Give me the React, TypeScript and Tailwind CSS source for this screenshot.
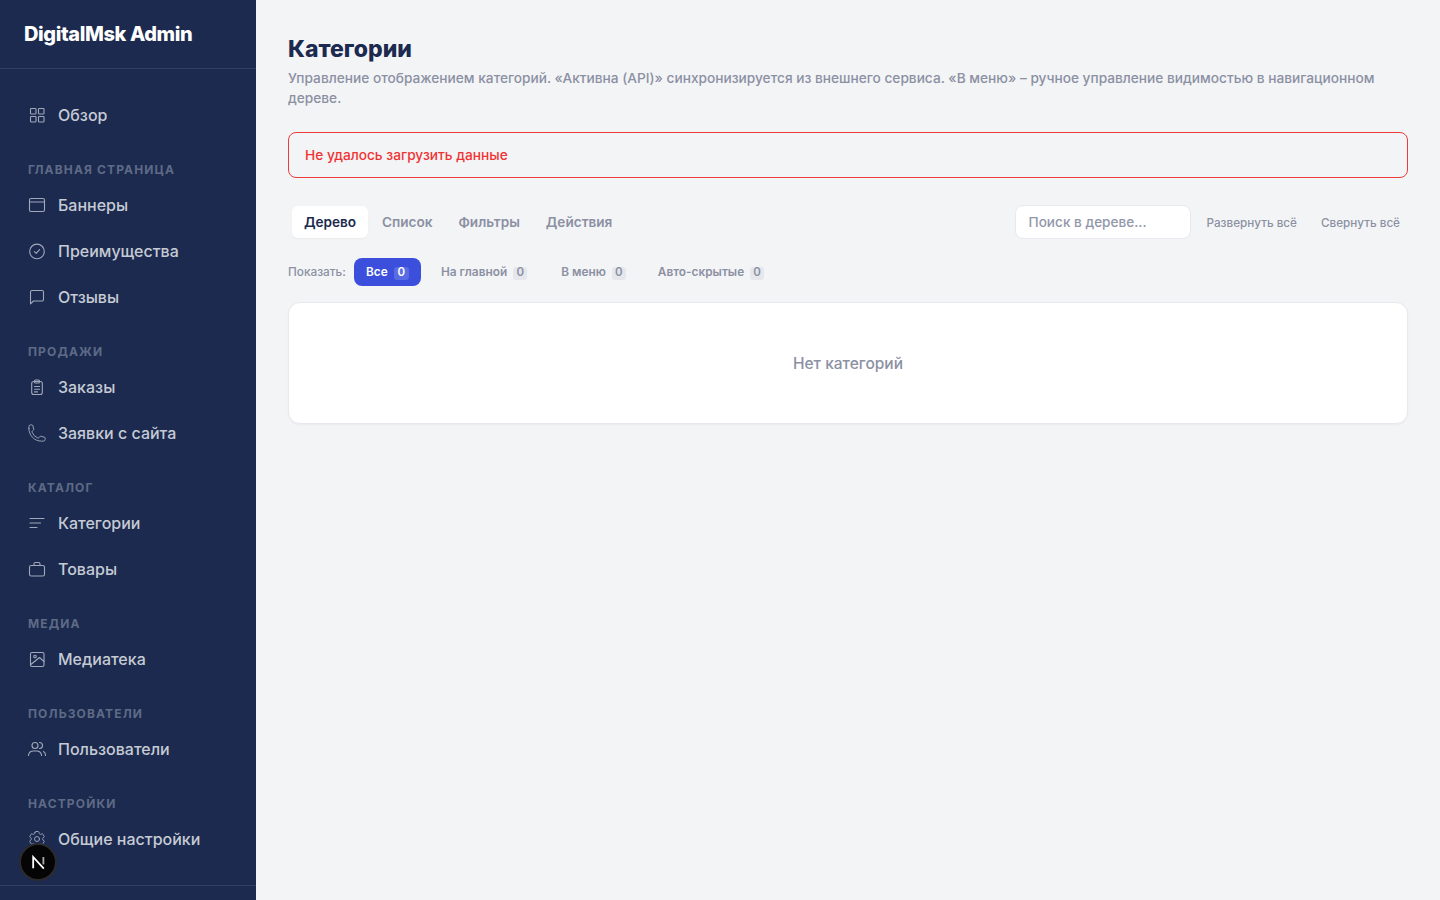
import { HiOutlineCog6Tooth, HiOutlinePhone } from "react-icons/hi2";
import type { ReactNode } from "react";

const iconClass = "w-5 h-5 shrink-0";

function Icon({ children }: { children: ReactNode }) {
  return (
    <svg className={iconClass} viewBox="0 0 20 20" fill="none" stroke="currentColor" strokeWidth="1.1" strokeLinecap="round" strokeLinejoin="round">
      {children}
    </svg>
  );
}

function NavItem({ icon, label }: { icon: ReactNode; label: string }) {
  return (
    <div className="flex items-center gap-[11px] h-10 pl-[27px] mb-1.5 text-[#c6cad5] text-[16px] font-medium">
      <span className="text-[#a2a8ba]">{icon}</span>
      <span>{label}</span>
    </div>
  );
}

function SectionLabel({ children }: { children: string }) {
  return (
    <div className="h-4 mt-[26px] mb-2 pt-[2px] pl-[28px] flex items-center text-[12px] leading-4 font-bold tracking-[0.095em] text-[#5f6a87] uppercase">
      {children}
    </div>
  );
}

function FilterChip({ label }: { label: string }) {
  return (
    <div className="flex items-center gap-[6px] h-7 px-3 pt-[2px] text-[11.85px] font-semibold text-[#8b90a3]">
      <span>{label}</span>
      <span className="h-[13px] w-[14px] flex items-center justify-center rounded-[3px] bg-[#e5e7ec] text-[11.5px] leading-none">0</span>
    </div>
  );
}

export default function App() {
  return (
    <div className="flex h-[900px] overflow-hidden bg-[#f3f4f6] font-['Inter',sans-serif]">
      <aside className="relative w-64 shrink-0 h-full flex flex-col bg-[#1b2a4e]">
        <div className="h-[69px] shrink-0 border-b border-[#323f60] pl-6 pt-[21px]">
          <div className="text-[20px] leading-[26px] font-extrabold tracking-[-0.02em] text-white">DigitalMsk Admin</div>
        </div>
        <nav className="flex-1 overflow-hidden pt-[26px]">
          <NavItem
            label="Обзор"
            icon={
              <Icon>
                <rect x="3.5" y="3.5" width="5.5" height="5.5" rx="0.8" />
                <rect x="11.5" y="3.5" width="5.5" height="5.5" rx="0.8" />
                <rect x="3.5" y="11.5" width="5.5" height="5.5" rx="0.8" />
                <rect x="11.5" y="11.5" width="5.5" height="5.5" rx="0.8" />
              </Icon>
            }
          />
          <SectionLabel>Главная страница</SectionLabel>
          <NavItem
            label="Баннеры"
            icon={
              <Icon>
                <rect x="2.5" y="3.5" width="15" height="13" rx="1.5" />
                <path d="M2.5 7h15" />
              </Icon>
            }
          />
          <NavItem
            label="Преимущества"
            icon={
              <Icon>
                <circle cx="10" cy="10.4" r="7.3" />
                <path d="M7.4 10.6l1.8 1.7 3.4-3.6" />
              </Icon>
            }
          />
          <NavItem
            label="Отзывы"
            icon={
              <Icon>
                <path d="M3.5 16.8V5A1.5 1.5 0 0 1 5 3.5h10A1.5 1.5 0 0 1 16.5 5v7.5A1.5 1.5 0 0 1 15 14H6.5z" />
              </Icon>
            }
          />
          <SectionLabel>Продажи</SectionLabel>
          <NavItem
            label="Заказы"
            icon={
              <Icon>
                <rect x="4.7" y="4.5" width="10.6" height="13" rx="2" />
                <rect x="7.5" y="3" width="5" height="3" rx="1" />
                <path d="M7.5 9.5h5M7.5 12.2h5M7.5 14.9h3" />
              </Icon>
            }
          />
          <NavItem label="Заявки с сайта" icon={<HiOutlinePhone className="w-5 h-5 shrink-0 stroke-[1.1]" />} />
          <SectionLabel>Каталог</SectionLabel>
          <NavItem
            label="Категории"
            icon={
              <Icon>
                <path d="M3 5.5h14M3 10h10.5M3 14.5h7" />
              </Icon>
            }
          />
          <NavItem
            label="Товары"
            icon={
              <Icon>
                <rect x="2.5" y="6.5" width="15" height="10.5" rx="1.8" />
                <path d="M7 6.5V5a1.5 1.5 0 0 1 1.5-1.5h3A1.5 1.5 0 0 1 13 5v1.5" />
              </Icon>
            }
          />
          <SectionLabel>Медиа</SectionLabel>
          <NavItem
            label="Медиатека"
            icon={
              <Icon>
                <rect x="3.5" y="3.5" width="13.5" height="14" rx="1.5" />
                <circle cx="8" cy="7.5" r="1.3" />
                <path d="M3.5 15.8l9-7.3 4.5 4" />
              </Icon>
            }
          />
          <SectionLabel>Пользователи</SectionLabel>
          <NavItem
            label="Пользователи"
            icon={
              <Icon>
                <circle cx="8" cy="6.5" r="3" />
                <path d="M1.5 16.5V16a5 5 0 0 1 5-4h3a5 5 0 0 1 5 4v.5" />
                <path d="M12.5 3.5a3 3 0 0 1 0 6" />
                <path d="M16.5 12.5a4 4 0 0 1 2 3.5v.5" />
              </Icon>
            }
          />
          <SectionLabel>Настройки</SectionLabel>
          <NavItem label="Общие настройки" icon={<HiOutlineCog6Tooth className="w-5 h-5 -mt-px shrink-0 stroke-[1.1]" />} />
        </nav>
        <div className="h-[15px] shrink-0 border-t border-[#323f60]" />
        {/* dev tools badge sits over the nav */}
        <div className="absolute left-[19px] top-[843px] w-[38px] h-[38px] rounded-full bg-[#050505] border-2 border-[#2c2c30] flex items-center justify-center">
          <svg viewBox="0 0 16 16" className="w-[17px] h-[17px]" fill="none">
            <path d="M3 13.5V2.8l10 11" stroke="white" strokeWidth="1.7" />
            <path d="M12.6 2.8v7" stroke="#aaaaaa" strokeWidth="1.7" />
          </svg>
        </div>
      </aside>

      <main className="flex-1 min-w-0 px-8 pt-8">
        <h1 className="text-[23px] leading-[34px] font-extrabold text-[#1b2a4e]">Категории</h1>
        <p className="mt-[2px] text-[13.7px] leading-5 font-medium text-[#8b90a3]">
          Управление отображением категорий. «Активна (API)» синхронизируется из внешнего сервиса. «В меню» – ручное управление видимостью в навигационном дереве.
        </p>

        <div className="mt-6 h-[46px] flex items-center px-4 rounded-lg border border-[#ef3a3a] text-[13.7px] font-medium text-[#ef3333]">
          Не удалось загрузить данные
        </div>

        <div className="mt-[22px] h-[44px] flex items-center justify-between">
          <div className="flex items-center pl-1 text-[13.6px] font-semibold text-[#8b90a3]">
            <div className="h-8 w-[76px] flex items-center justify-center rounded-md bg-white text-[#1b2a4e] shadow-[0_1px_2px_rgba(0,0,0,0.04)]">Дерево</div>
            <div className="h-8 pl-[14px] pr-[13px] flex items-center">Список</div>
            <div className="h-8 px-[13px] flex items-center">Фильтры</div>
            <div className="h-8 px-[13px] flex items-center">Действия</div>
          </div>
          <div className="flex items-center">
            <input
              placeholder="Поиск в дереве..."
              className="w-[176px] h-[34px] px-[13px] rounded-lg bg-white border border-[#e8e9ee] text-[13.6px] font-medium outline-none placeholder:text-[#9297a8]"
            />
            <div className="px-4 pt-[4px] text-[11.7px] font-medium text-[#8b90a3]">Развернуть всё</div>
            <div className="px-2 pt-[4px] text-[11.7px] font-medium text-[#8b90a3]">Свернуть всё</div>
          </div>
        </div>

        <div className="mt-[14px] h-7 flex items-center">
          <span className="mr-2 pt-[2px] text-[11.8px] font-medium text-[#8b90a3]">Показать:</span>
          <div className="flex items-center justify-center gap-[6px] h-7 w-[67px] pt-[2px] rounded-lg bg-[#3b4fdc] text-[11.85px] font-semibold text-white">
            <span>Все</span>
            <span className="h-[13px] w-[15px] flex items-center justify-center rounded-[3px] bg-[#5a6ce3] text-[11.5px] leading-none">0</span>
          </div>
          <div className="w-2" />
          <FilterChip label="На главной" />
          <div className="w-2.5" />
          <FilterChip label="В меню" />
          <div className="w-2" />
          <FilterChip label="Авто-скрытые" />
        </div>

        <div className="mt-4 h-[122px] pt-[2px] flex items-center justify-center rounded-xl border border-[#e8e9ee] bg-white shadow-[0_1px_2px_rgba(0,0,0,0.04)] text-[15.5px] font-medium text-[#8b90a3]">
          Нет категорий
        </div>
      </main>
    </div>
  );
}
